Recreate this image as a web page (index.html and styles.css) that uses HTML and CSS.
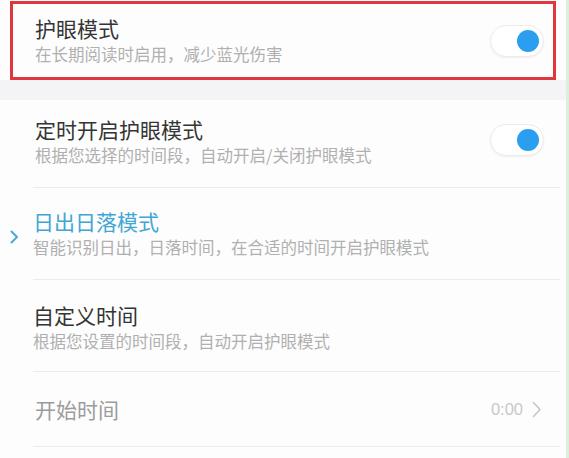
FILE: index.html
```html
<!DOCTYPE html>
<html lang="zh-CN">
<head>
<meta charset="utf-8">
<title>护眼模式</title>
<link rel="stylesheet" href="styles.css">
</head>
<body>
<div class="page">
  <div class="main">
    <div class="top">
      <div class="highlight">
        <div class="text">
          <div class="title">护眼模式</div>
          <div class="sub">在长期阅读时启用，减少蓝光伤害</div>
        </div>
        <div class="toggle"><span class="knob"></span></div>
      </div>
    </div>
    <div class="band"></div>

    <div class="row">
      <div class="gutter"></div>
      <div class="body r2">
        <div class="text">
          <div class="title">定时开启护眼模式</div>
          <div class="sub">根据您选择的时间段，自动开启/关闭护眼模式</div>
        </div>
        <div class="toggle"><span class="knob"></span></div>
      </div>
    </div>

    <div class="row">
      <div class="gutter">
        <svg class="sel" width="9" height="14" viewBox="0 0 9 14"><polyline points="1.5,1.5 7,7 1.5,12.5" fill="none" stroke="#4aa9d6" stroke-width="2" stroke-linecap="round" stroke-linejoin="round"/></svg>
      </div>
      <div class="body r3">
        <div class="text">
          <div class="title blue">日出日落模式</div>
          <div class="sub">智能识别日出，日落时间，在合适的时间开启护眼模式</div>
        </div>
      </div>
    </div>

    <div class="row">
      <div class="gutter"></div>
      <div class="body r4">
        <div class="text">
          <div class="title">自定义时间</div>
          <div class="sub">根据您设置的时间段，自动开启护眼模式</div>
        </div>
      </div>
    </div>

    <div class="row">
      <div class="gutter"></div>
      <div class="body r5">
        <div class="text">
          <div class="title muted">开始时间</div>
        </div>
        <div class="value">
          <span>0:00</span>
          <svg width="10" height="17" viewBox="0 0 10 17"><polyline points="1.5,1.5 8,8.5 1.5,15.5" fill="none" stroke="#c4c4c4" stroke-width="1.5" stroke-linecap="round" stroke-linejoin="round"/></svg>
        </div>
      </div>
    </div>
  </div>
  <div class="strip"></div>
</div>
</body>
</html>
```
FILE: styles.css
```css
html, body {
  margin: 0;
  padding: 0;
  background: #ffffff;
}
body {
  font-family: "Noto Sans CJK SC", "Noto Sans", sans-serif;
  width: 569px;
  height: 458px;
  overflow: hidden;
}
.page {
  display: flex;
  height: 458px;
}
.main {
  flex: 1;
  background: #fdfdfd;
}
.strip {
  width: 3px;
  background: #dcefdc;
}
.top {
  padding: 1px 10px 0 10px;
  background: #fdfdfd;
}
.highlight {
  height: 79px;
  box-sizing: border-box;
  border: 3px solid #e0363e;
  display: flex;
  align-items: center;
  padding: 0 9px 0 22px;
}
.highlight .text {
  flex: 1;
  padding-bottom: 3px;
}
.band {
  height: 20px;
  background: #f4f4f6;
}
.row {
  display: flex;
}
.gutter {
  width: 33px;
  display: flex;
  align-items: center;
  justify-content: flex-end;
}
.sel {
  margin-right: 14px;
  margin-top: 6px;
}
.body {
  flex: 1;
  margin-right: 6px;
  border-bottom: 1px solid #ececec;
  display: flex;
  align-items: center;
  padding-right: 16px;
  padding-left: 2px;
}
.body .text {
  flex: 1;
}
.r2 { padding-top: 15px; padding-bottom: 22px; }
.r3 { padding-top: 19px; padding-bottom: 22px; padding-left: 0; }
.r4 { padding-top: 21px; padding-bottom: 20px; padding-left: 0; }
.r5 { padding-top: 23px; padding-bottom: 23px; }
.title {
  font-size: 21px;
  line-height: 28px;
  color: #343434;
  margin-bottom: 2px;
}
.title.blue {
  color: #3fa6d4;
}
.title.muted {
  color: #9c9c9c;
  margin-bottom: 0;
}
.sub {
  font-size: 16.5px;
  line-height: 20px;
  color: #b0b0b0;
}
.toggle {
  width: 54px;
  height: 32px;
  box-sizing: border-box;
  border-radius: 16px;
  background: #ffffff;
  border: 1px solid #ececec;
  box-shadow: 0 1px 2px rgba(0,0,0,0.06);
  display: flex;
  align-items: center;
  justify-content: flex-end;
  padding-right: 4px;
}
.knob {
  width: 22px;
  height: 22px;
  border-radius: 50%;
  background: #2b9ef0;
}
.value {
  display: flex;
  align-items: center;
  gap: 9px;
  font-family: "Liberation Sans", sans-serif;
  font-size: 16.5px;
  color: #c8c8c8;
  padding-right: 2px;
}
```
